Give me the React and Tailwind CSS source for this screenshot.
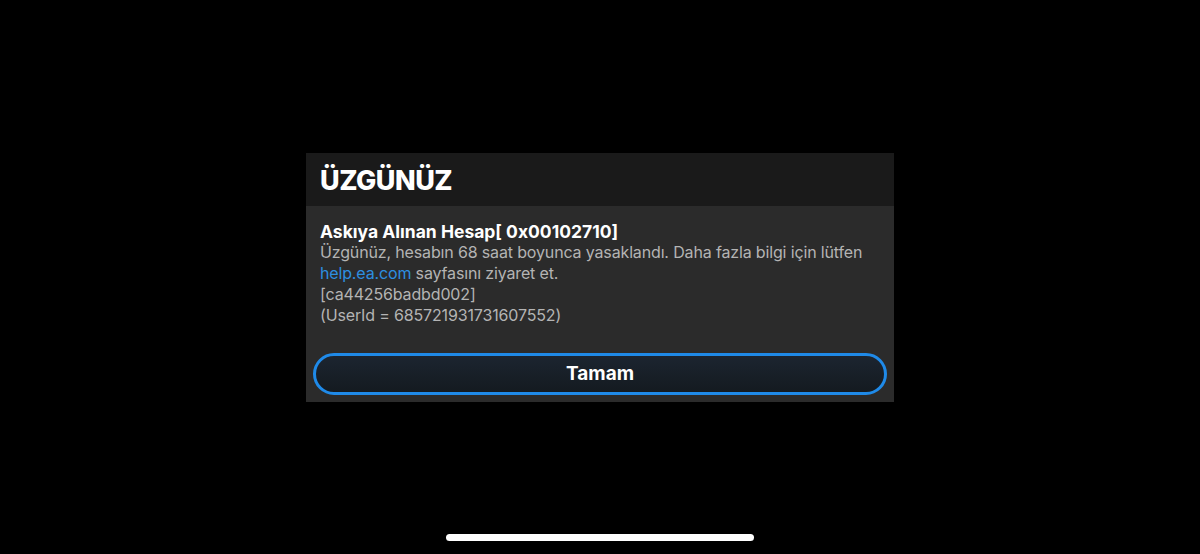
import React from 'react'

// 账号封禁提示弹窗
function BanDialog() {
  return (
    <div className="w-[588px] bg-[#2b2b2b]">
      {/* 标题栏 */}
      <div className="h-[53px] bg-[#1a1a1a] flex items-center px-[14px]">
        <h1 className="text-[27px] font-extrabold text-white tracking-[-0.5px] leading-none pt-[2px]">ÜZGÜNÜZ</h1>
      </div>

      {/* 内容 */}
      <div className="px-[14px] pt-[15px] text-[16px] leading-[21px] tracking-[-0.15px]">
        <p className="font-bold text-white text-[17.5px] tracking-[0px]">Askıya Alınan Hesap[ 0x00102710]</p>
        <p className="text-[#b4b4b4]">
          Üzgünüz, hesabın 68 saat boyunca yasaklandı. Daha fazla bilgi için lütfen{' '}
          <span className="text-[#2d8fe0]">help.ea.com</span> sayfasını ziyaret et.
        </p>
        <p className="text-[#b4b4b4]">[ca44256badbd002]</p>
        <p className="text-[#b4b4b4]">(UserId = 685721931731607552)</p>
      </div>

      {/* 按钮 */}
      <div className="px-[7px] pt-[27px] pb-[7px]">
        <button className="w-full h-[42px] rounded-full border-[3px] border-[#1f8ae8] bg-gradient-to-b from-[#1c2530] to-[#141a20] text-white font-bold text-[19px]">
          Tamam
        </button>
      </div>
    </div>
  )
}

export default function App() {
  return (
    <div
      className="w-[1200px] h-[554px] bg-black flex flex-col items-center"
      style={{ fontFamily: 'Inter, "Noto Sans", sans-serif' }}
    >
      <div className="flex-1 flex items-start pt-[153px]">
        <BanDialog />
      </div>
      <div className="w-[308px] h-[7px] rounded-full bg-white mb-[13px]" />
    </div>
  )
}
